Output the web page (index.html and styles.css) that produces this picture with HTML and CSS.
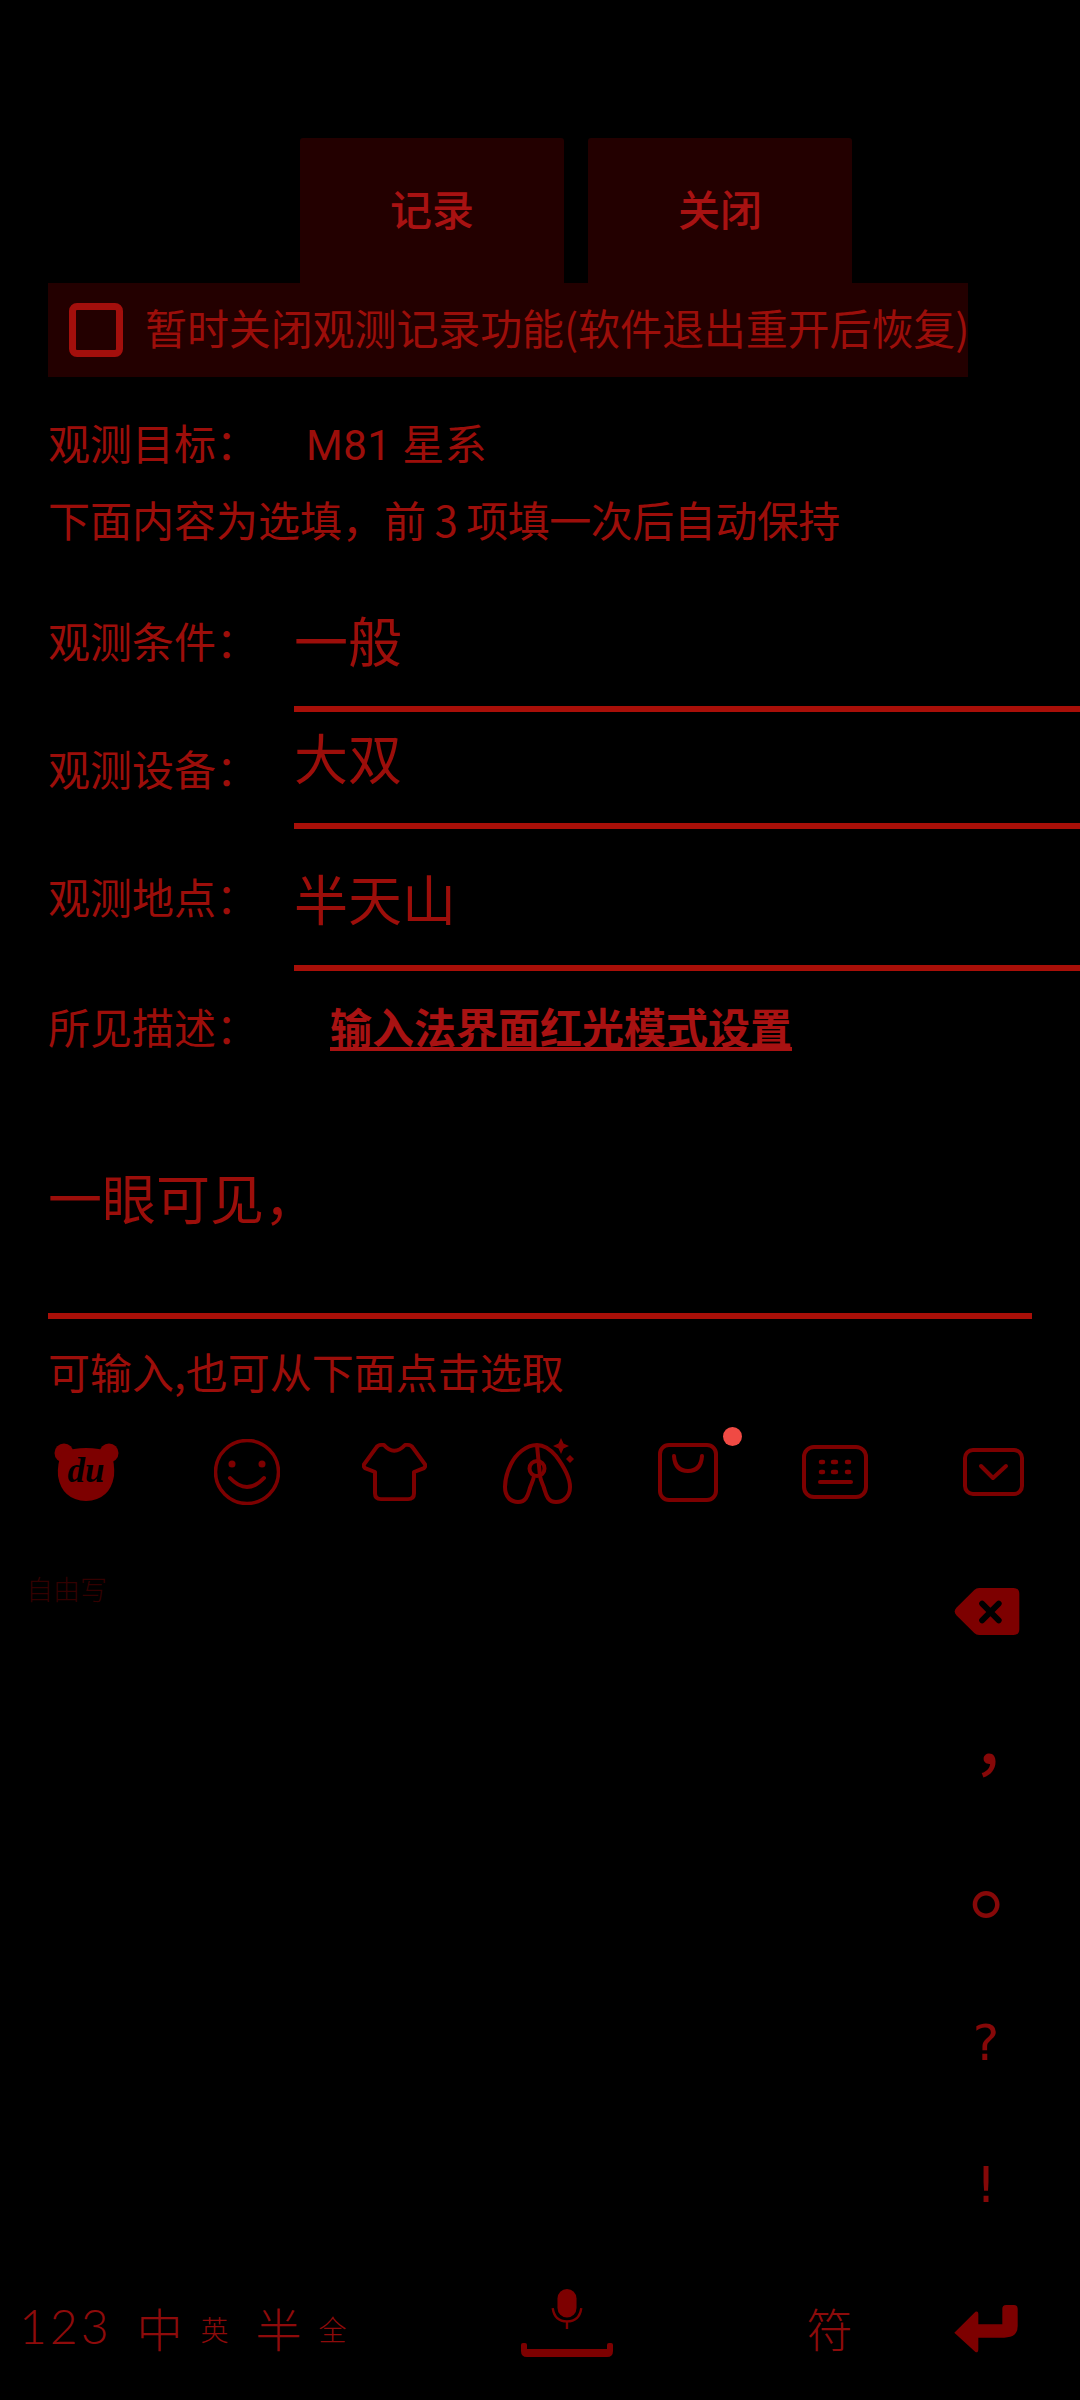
FILE: index.html
```html
<!DOCTYPE html>
<html lang="zh-CN">
<head>
<meta charset="utf-8">
<title>观测记录</title>
<link rel="stylesheet" href="styles.css">
</head>
<body>
<main class="page">
  <section class="actions">
    <button class="btn">记录</button>
    <button class="btn">关闭</button>
  </section>
  <label class="toggle">
    <span class="box"></span>
    <span class="toggle-text">暂时关闭观测记录功能(软件退出重开后恢复)</span>
  </label>
  <div class="line target"><span class="label">观测目标：</span><span class="target-val">M81 星系</span></div>
  <div class="line hint">下面内容为选填，<span class="tight">前 3 项填一次后自动保持</span></div>
  <div class="field f1"><span class="label">观测条件：</span><div class="input">一般</div></div>
  <div class="field f2"><span class="label">观测设备：</span><div class="input">大双</div></div>
  <div class="field f3"><span class="label">观测地点：</span><div class="input">半天山</div></div>
  <div class="line desc"><span class="label">所见描述：</span><a class="link" href="#">输入法界面红光模式设置</a></div>
  <div class="textarea">一眼可见，</div>
  <div class="line note">可输入,也可从下面点击选取</div>

  <section class="keyboard">
    <div class="toolbar">
      <svg class="ic" width="65" height="58" viewBox="14 9 65 58"><circle cx="24" cy="19" r="9.5" class="f"/><circle cx="69" cy="19" r="9.5" class="f"/><path class="f" d="M22 18Q46 10 71 18Q75 30 74 42Q70 66 46 67Q22 66 18 42Q17 30 22 18Z"/><text x="46" y="48" class="du">du</text></svg>
      <svg class="ic" width="66" height="66" viewBox="0 0 66 66"><circle cx="33" cy="33" r="31.5" class="s thin"/><circle cx="18" cy="25" r="3.5" class="f"/><circle cx="48" cy="25" r="3.5" class="f"/><path class="s" d="M16 39Q33 57 50 39"/></svg>
      <svg class="ic" width="65" height="58" viewBox="0 0 65 60" preserveAspectRatio="none"><path class="s" d="M19 2H22Q32 14 43 2H46Q49 2 51 5L63 22Q64 24 62 26L52 30V52Q52 58 46 58H19Q13 58 13 52V30L3 26Q1 24 2 22L14 5Q16 2 19 2Z"/></svg>
      <svg class="ic" width="76" height="68" viewBox="12 16 76 68"><path class="s" d="M47 23C36 23 26 32 21 42C17 50 15 58 15 65C15 75 21 80 28 80C37 80 38 72 40 66C41 62 43 60 44 54M50 54C51 60 53 62 54 66C56 72 57 80 66 80C73 80 80 75 80 65C80 55 72 42 66 34C60 27 54 23 47 23Z"/><circle cx="47" cy="46.500" r="7.500" class="s"/><path class="f" d="M71 16L73.500 21.500L79 24L73.500 26.500L71 32L68.500 26.500L63 24L68.500 21.500Z"/><path class="f" d="M80 33L84 37L80 41L76 37Z"/></svg>
      <span class="bag-wrap">
        <svg class="ic" width="60" height="59" viewBox="0 0 60 59"><rect x="2" y="2" width="56" height="55" rx="9" class="s"/><path class="s" d="M16 13Q17 28 30 28Q43 28 44 13"/></svg>
        <span class="dot"></span>
      </span>
      <svg class="ic" width="66" height="54" viewBox="0 0 66 54"><rect x="2" y="2" width="62" height="50" rx="10" class="s"/><path class="dots" d="M19 17H21M31 17H34M45 17H47M19 27H21M31 27H34M45 27H47"/><path class="s" d="M18 37H49"/></svg>
      <svg class="ic" width="61" height="48" viewBox="0 0 61 48"><rect x="2" y="2" width="57" height="44" rx="8" class="s"/><path class="s" d="M18 18L30 30L43 18"/></svg>
    </div>
    <div class="cand-row">
      <span class="free">自由写</span>
      <svg class="ic" width="66" height="47" viewBox="0 0 66 48"><path class="f" d="M20 2Q22 0 25 0H60Q66 0 66 6V42Q66 48 60 48H25Q22 48 20 46L2 28Q-2 24 2 20Z"/><path class="x" d="M28 16L45 33M45 16L28 33"/></svg>
    </div>
    <div class="punct">
      <span class="p p1">，</span>
      <span class="p p2">。</span>
      <span class="p p3">?</span>
      <span class="p p4">!</span>
    </div>
    <div class="bottom">
      <span class="k num">123</span>
      <span class="k main m1">中</span><span class="k sub s1">英</span>
      <span class="k main m2">半</span><span class="k sub s2">全</span>
      <span class="space">
        <svg class="ic mic" width="32" height="40" viewBox="0 0 32 42"><rect x="6" y="0" width="20" height="30" rx="10" class="f"/><path class="ms" d="M1 20Q3 34 16 34Q29 34 31 20M16 34V42"/></svg>
        <svg class="ic" width="92" height="14" viewBox="0 0 92 14"><path class="f" d="M0 2Q0 0 2 0H4Q6 0 6 2V6H86V2Q86 0 88 0H90Q92 0 92 2V8Q92 14 86 14H6Q0 14 0 8Z"/></svg>
      </span>
      <span class="k main sym">符</span>
      <svg class="ic enter" width="66" height="48" viewBox="0 0 66 50"><path class="f" d="M0 29L22 7Q25 6 25 9V20H50V4Q50 0 54 0H62Q66 0 66 4V22Q66 34 52 34H25V46Q25 50 22 49Z"/></svg>
    </div>
  </section>
</main>
</body>
</html>
```
FILE: styles.css
```css
* { box-sizing: border-box; }
html, body { margin: 0; background: #000; }
body { font-family: "Noto Sans CJK SC", "Noto Sans", sans-serif; color: #9c0e0a; }
.page { width: 1080px; height: 2400px; overflow: hidden; display: flex; flex-direction: column; padding-top: 138px; }
.actions { display: flex; gap: 24px; padding-left: 300px; }
.btn { width: 264px; height: 145px; border: 0; border-radius: 3px 3px 0 0; background: #230000; color: #a81212; font: 500 42px/1 "Noto Sans CJK SC", sans-serif; padding-bottom: 7px; }
.toggle { margin-left: 48px; width: 920px; height: 94px; background: #230000; display: flex; align-items: center; gap: 22px; padding: 0 0 7px 21px; font-size: 42px; white-space: nowrap; }
.toggle-text { letter-spacing: -0.1px; }
.box { width: 54px; height: 54px; border: 7px solid #a30f0c; border-radius: 8px; flex: none; margin-top: 7px; }
.line { font-size: 42px; padding-left: 48px; line-height: 60px; white-space: nowrap; }
.label { display: inline-block; width: 246px; font-size: 42px; }
.target { margin-top: 35px; }
.target .label { width: 258px; }
.target-val { font-family: Roboto, "Noto Sans CJK SC", sans-serif; letter-spacing: 0.5px; }
.hint { margin-top: 13px; }
.tight { letter-spacing: -0.5px; }
.field { display: flex; padding-left: 48px; white-space: nowrap; }
.field .label { line-height: 60px; flex: none; }
.input { flex: 1; font-size: 54px; line-height: 76px; border-bottom: 6px solid #a80f08; }
.f1 { margin-top: 45px; }
.f1 .label { margin-top: 16px; }
.f1 .input { height: 118px; padding-top: 8px; }
.f2 .label { margin-top: 26px; }
.f2 .input { height: 117px; padding-top: 7px; }
.f3 .label { margin-top: 37px; }
.f3 .input { height: 142px; padding-top: 31px; }
.desc { margin-top: 25px; }
.link { color: #a81212; font-weight: 700; text-decoration: underline; margin-left: 36px; }
.textarea { margin: 103px 48px 0; height: 160px; font-size: 54px; line-height: 76px; border-bottom: 6px solid #a80f08; }
.note { margin-top: 22px; }
.keyboard { flex: 1; display: flex; flex-direction: column; position: relative; }
.ic { display: block; flex: none; }
.toolbar { display: grid; grid-template-columns: 161px 160px 135px 156px 140px 154px 163px; padding-left: 6px; margin-top: 37px; height: 68px; align-items: center; justify-items: center; }
.f { fill: #7d0000; }
.s { fill: none; stroke: #7d0000; stroke-width: 4; stroke-linecap: round; stroke-linejoin: round; }
.thin { stroke-width: 3.5; }
.dots { fill: none; stroke: #7d0000; stroke-width: 4.5; stroke-linecap: round; }
.ms { fill: none; stroke: #7d0000; stroke-width: 2.5; }
.x { fill: none; stroke: #000; stroke-width: 6; stroke-linecap: round; }
.du { font: italic 700 35px "Liberation Serif", serif; text-anchor: middle; fill: #000; }
.bag-wrap { position: relative; display: block; }
.dot { position: absolute; left: 65px; top: -16px; width: 19px; height: 19px; border-radius: 50%; background: #f04a44; }
.cand-row { display: flex; justify-content: space-between; align-items: flex-start; padding: 0 60px 0 26px; margin-top: 82px; height: 48px; }
.free { font-size: 27px; line-height: 28px; font-weight: 300; color: #330000; margin-top: -13px; }
.p { position: absolute; color: #860808; line-height: 1; }
.p1 { left: 972px; top: 306px; font-size: 66px; font-weight: 500; }
.p2 { left: 969px; top: 429px; font-size: 88px; }
.p3 { left: 956px; width: 60px; text-align: center; top: 617px; font: 50px/1 "DejaVu Sans", sans-serif; }
.p4 { left: 956px; width: 60px; text-align: center; top: 759px; font: 50px/1 "DejaVu Sans", sans-serif; }
.bottom { margin-top: auto; margin-bottom: 43px; display: flex; align-items: flex-end; height: 70px; padding-left: 19px; position: relative; }
.k { font-weight: 300; line-height: 1; color: #8e0b0b; }
.num { font-family: Lato, sans-serif; font-size: 48px; font-weight: 300; letter-spacing: 3px; margin-bottom: 7px; }
.main { font-size: 46px; margin-bottom: 7px; }
.sub { font-size: 28px; margin-bottom: 14px; }
.m1 { margin-left: 25px; }
.s1 { margin-left: 18px; }
.m2 { margin-left: 27px; }
.s2 { margin-left: 17px; }
.space { margin-left: 174px; width: 92px; display: flex; flex-direction: column; align-items: center; gap: 14px; }
.sym { margin-left: 194px; }
.enter { margin-left: 100px; margin-bottom: 4px; }
```
